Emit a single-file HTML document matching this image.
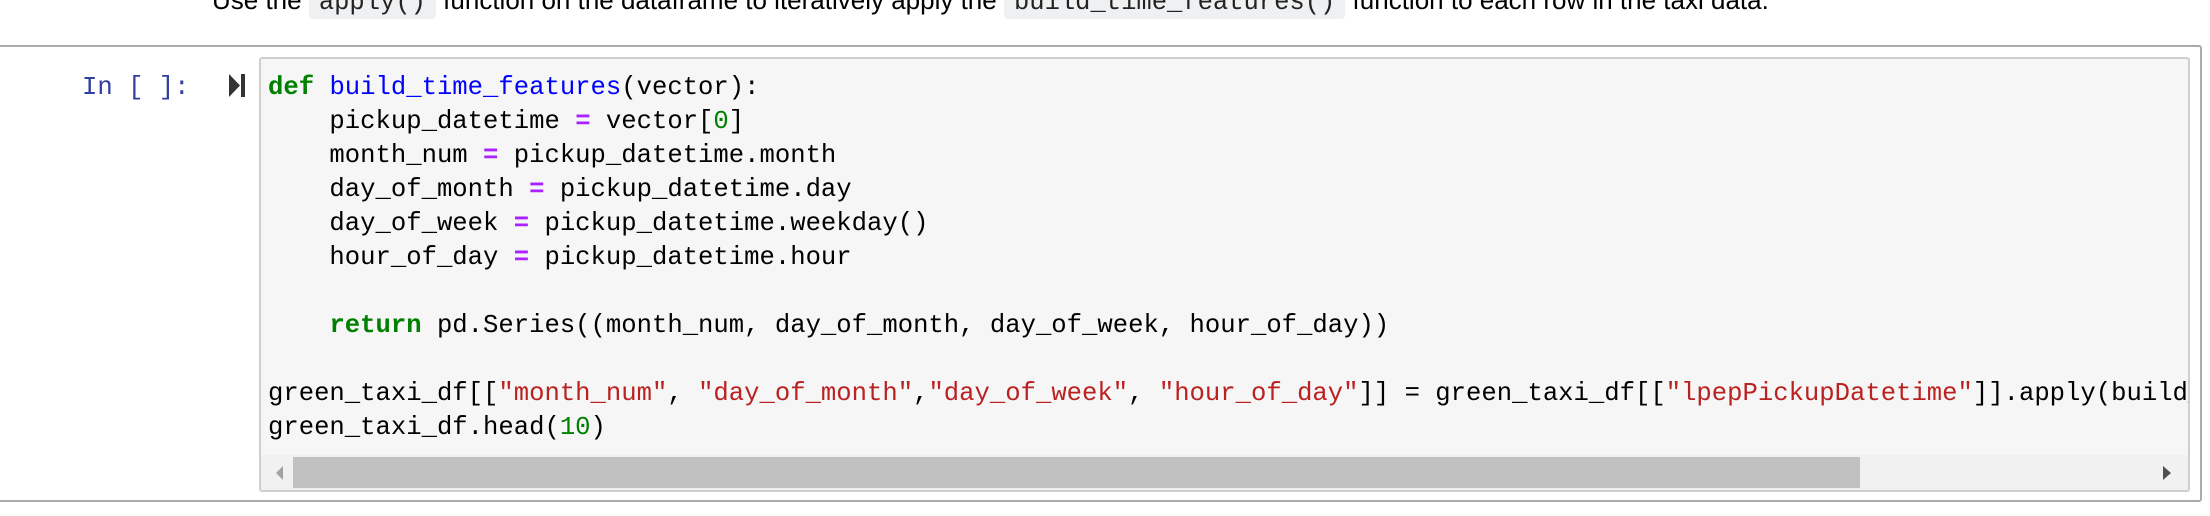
<!DOCTYPE html>
<html><head><meta charset="utf-8"><style>
body{margin:0;width:2210px;height:516px;background:#fff;position:relative;overflow:hidden;font-family:"Liberation Sans",Arial,sans-serif}
.top{position:absolute;left:212px;top:-17px;font-size:26px;color:#000;white-space:nowrap;line-height:34px}
.top code{font-family:"Liberation Mono",monospace;background:#eff0f1;padding:2px 10px;border-radius:4px;font-size:25.5px;color:#222}
.outer{position:absolute;left:-4px;top:45px;width:2206px;height:457px;border:2px solid #ababab;border-radius:3px;box-sizing:border-box}
.prompt{position:absolute;left:82px;top:71px;font-family:"Liberation Mono",monospace;font-size:25.6px;line-height:34px;color:#303f9f}
.inner{position:absolute;left:259px;top:57px;width:1931px;height:435px;border:2px solid #cfcfcf;border-radius:3px;background:#f6f6f6;box-sizing:border-box;overflow:hidden}
pre{position:absolute;left:7px;top:12px;margin:0;font-family:"Liberation Mono",monospace;font-size:25.6px;line-height:34px;color:#000;white-space:pre}
.k{color:#008000;font-weight:bold}.f{color:#0000ff}.o{color:#aa22ff;font-weight:bold}.n{color:#008000}.s{color:#ba2121}
.track{position:absolute;left:0;right:0;bottom:0;height:35px;background:#f1f1f1}
.thumb{position:absolute;left:32px;width:1567px;top:2px;bottom:2px;background:#c1c1c1}
</style></head><body>
<div class="top">Use the <code>apply()</code> function on the dataframe to iteratively apply the <code>build_time_features()</code> function to each row in the taxi data.</div>
<div class="outer"></div>
<div class="prompt">In [ ]:</div>
<svg style="position:absolute;left:229px;top:74px" width="17" height="24" viewBox="0 0 17 24"><path d="M0 0 L11 11.5 L0 23 Z" fill="#333"/><rect x="12" y="0" width="4" height="23" fill="#333"/></svg>
<div class="inner">
<pre><span class="k">def</span> <span class="f">build_time_features</span>(vector):
    pickup_datetime <span class="o">=</span> vector[<span class="n">0</span>]
    month_num <span class="o">=</span> pickup_datetime.month
    day_of_month <span class="o">=</span> pickup_datetime.day
    day_of_week <span class="o">=</span> pickup_datetime.weekday()
    hour_of_day <span class="o">=</span> pickup_datetime.hour

    <span class="k">return</span> pd.Series((month_num, day_of_month, day_of_week, hour_of_day))

green_taxi_df[[<span class="s">"month_num"</span>, <span class="s">"day_of_month"</span>,<span class="s">"day_of_week"</span>, <span class="s">"hour_of_day"</span>]] = green_taxi_df[[<span class="s">"lpepPickupDatetime"</span>]].apply(build_time_features, axis=1)
green_taxi_df.head(<span class="n">10</span>)</pre>
<div class="track"><div class="thumb"></div>
<svg style="position:absolute;left:14px;top:10px" width="10" height="16"><path d="M8 1 L1 8 L8 15Z" fill="#a3a3a3"/></svg>
<svg style="position:absolute;right:16px;top:10px" width="10" height="16"><path d="M1 1 L9 8 L1 15Z" fill="#505050"/></svg>
</div>
</div>
</body></html>
